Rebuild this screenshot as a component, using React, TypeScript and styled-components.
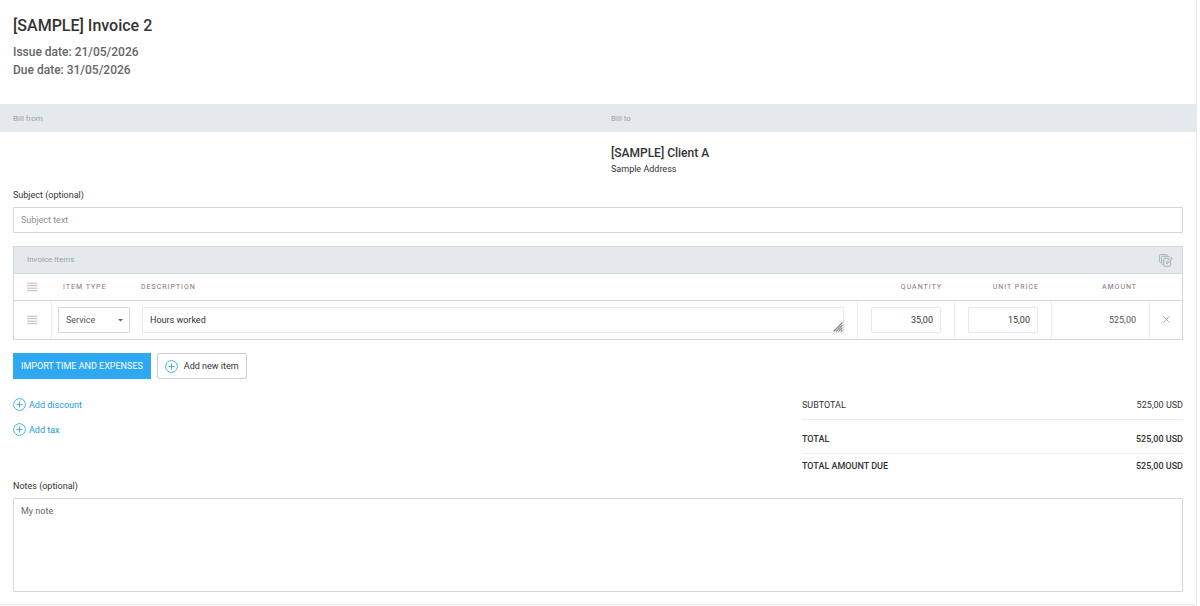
import React from "react";
import styled, { createGlobalStyle, css } from "styled-components";

const GlobalStyle = createGlobalStyle`
  * { box-sizing: border-box; }
  body {
    margin: 0;
    background: #fff;
    color: #333;
    font-family: Roboto, "Liberation Sans", sans-serif;
    font-size: 9px;
    line-height: 12px;
  }
  button, input, select, textarea { font: inherit; color: inherit; margin: 0; }
  svg { display: block; flex: none; }
`;

const line = "#d3d9db";
const soft = "#eceff0";

const Sheet = styled.main`
  margin-right: 3px;
  padding-bottom: 12px;
  border-right: 1px solid #e6e9eb;
  border-bottom: 1px solid #e6e9eb;
`;

const Header = styled.header`
  padding: 16px 13px 25px;
`;

const Title = styled.h1`
  margin: 0 0 8px;
  font-size: 16px;
  line-height: 20px;
  font-weight: 500;
`;

const DateLine = styled.p`
  margin: 0;
  font-size: 12px;
  line-height: 17px;
  font-weight: 500;
  color: #666;
`;

const Dates = styled.div`
  display: grid;
  gap: 1px;
`;

const PartyBar = styled.div`
  display: grid;
  grid-template-columns: 1fr 1fr;
  padding: 9px 0 7px;
  background: #e4e9ed;
  color: #9ba1a5;
  font-size: 8px;
`;

const PartyCell = styled.div`
  padding-left: 13px;
`;

const Parties = styled.div`
  display: grid;
  grid-template-columns: 1fr 1fr;
  padding: 13px 0 14px;
`;

const ClientName = styled.h2`
  margin: 0 0 2px;
  font-size: 12px;
  line-height: 16px;
  font-weight: 500;
`;

const Address = styled.p`
  margin: 0;
`;

const Body = styled.div`
  padding: 0 13px;
`;

const Label = styled.label`
  display: block;
  margin-bottom: 6px;
`;

const field = css`
  display: block;
  width: 100%;
  border: 1px solid ${line};
  border-radius: 1px;
  background: #fff;
  outline: none;
`;

const SubjectInput = styled.input`
  ${field}
  height: 26px;
  padding: 0 7px;
  &::placeholder { color: #8f8f8f; opacity: 1; }
`;

const NotesArea = styled.textarea`
  ${field}
  height: 94px;
  padding: 6px 7px;
  resize: none;
  color: #666;
`;

const Items = styled.section`
  margin-top: 13px;
  border: 1px solid ${line};
`;

const ItemsBar = styled.div`
  display: flex;
  align-items: center;
  justify-content: space-between;
  height: 26px;
  padding: 0 9px 0 13px;
  background: #e4e9ed;
`;

const ItemsTitle = styled.h3`
  margin: 0;
  font-size: 8px;
  font-weight: 400;
  color: #9ba1a5;
`;

const IconButton = styled.button`
  display: inline-flex;
  padding: 0;
  border: 0;
  background: none;
  color: #a4abaf;
  cursor: pointer;
`;

const Table = styled.table`
  width: 100%;
  table-layout: fixed;
  border-collapse: separate;
  border-spacing: 0;
`;

const Col = styled.col<{ $w?: number }>`
  ${(p) => p.$w && `width: ${p.$w}px;`}
`;

const Th = styled.th<{ $end?: boolean; $pad?: number }>`
  height: 28px;
  padding: 0 13px 0 ${(p) => p.$pad ?? 13}px;
  border-top: 1px solid ${line};
  border-bottom: 1px solid ${line};
  text-align: ${(p) => (p.$end ? "right" : "left")};
  font-size: 7px;
  font-weight: 400;
  letter-spacing: 1px;
  color: #777;
`;

const Td = styled.td<{ $tight?: boolean; $line?: boolean; $end?: boolean }>`
  height: 38px;
  padding: 0 13px 0 ${(p) => (p.$tight ? 6 : 13)}px;
  ${(p) => p.$line && `border-right: 1px solid ${soft};`}
  text-align: ${(p) => (p.$end ? "right" : "left")};
  color: #555;
`;

const SelectWrap = styled.div`
  position: relative;
  width: 72px;
`;

const Select = styled.select`
  ${field}
  height: 26px;
  padding: 0 7px;
  appearance: none;
`;

const Caret = styled.svg`
  position: absolute;
  top: 12px;
  right: 7px;
  pointer-events: none;
`;

const DescriptionWrap = styled.div`
  position: relative;
`;

const Description = styled.textarea`
  ${field}
  height: 26px;
  padding: 6px 7px;
  border-color: #e6eaeb;
  resize: none;
  overflow: hidden;
  color: #333;
`;

const Grip = styled.svg`
  position: absolute;
  right: 1px;
  bottom: 1px;
  pointer-events: none;
`;

const NumberInput = styled.input`
  ${field}
  height: 26px;
  padding: 0 7px;
  border-color: #e6eaeb;
  text-align: right;
  color: #333;
`;

const Actions = styled.div`
  display: flex;
  gap: 6px;
  margin-top: 13px;
`;

const Button = styled.button<{ $primary?: boolean }>`
  display: inline-flex;
  align-items: center;
  gap: 6px;
  height: 26px;
  padding: 0 7px;
  border: 1px solid ${(p) => (p.$primary ? "#2fa8f2" : "#ccd0d2")};
  border-radius: ${(p) => (p.$primary ? 0 : 2)}px;
  background: ${(p) => (p.$primary ? "#2fa8f2" : "#fff")};
  color: ${(p) => (p.$primary ? "#fff" : "#333")};
  white-space: nowrap;
  cursor: pointer;
`;

const Summary = styled.div`
  display: flex;
  justify-content: space-between;
  margin-top: 19px;
`;

const Links = styled.div`
  display: flex;
  flex-direction: column;
  align-items: flex-start;
  gap: 12px;
`;

const AddLink = styled.a`
  display: inline-flex;
  align-items: center;
  gap: 3px;
  height: 13px;
  color: #1a9cd6;
  text-decoration: none;
`;

const Totals = styled.dl`
  width: 33%;
  max-width: 381px;
  min-width: 240px;
  margin: 1px 0 0;
`;

const TotalRow = styled.div<{ $strong?: boolean; $space?: number; $last?: boolean }>`
  display: flex;
  justify-content: space-between;
  padding: ${(p) => p.$space ?? 0}px 0 ${(p) => (p.$last ? 0 : 8)}px;
  ${(p) => !p.$last && `border-bottom: 1px solid ${soft};`}
  font-weight: ${(p) => (p.$strong ? 500 : 400)};
`;

const Amount = styled.dd`
  margin: 0;
`;

const Notes = styled.div`
  margin-top: 8px;
`;

const PlusCircle = () => (
  <svg width="13" height="13" viewBox="0 0 13 13" fill="none" stroke="#38a9dc" aria-hidden="true">
    <circle cx="6.5" cy="6.5" r="5.9" strokeWidth="0.9" />
    <path d="M6.5 3.5v6M3.5 6.5h6" strokeWidth="0.9" />
  </svg>
);

const Lines = () => (
  <svg width="11" height="10" viewBox="0 0 11 10" stroke="#b9bdbf" aria-hidden="true">
    <path d="M0 1.2h10.5M0 3.7h10.5M0 6.2h10.5M0 8.7h10.5" strokeWidth="1" />
  </svg>
);

const CopyEdit = () => (
  <svg width="14" height="13" viewBox="0 0 14 13" fill="none" stroke="currentColor" strokeWidth="0.9" aria-hidden="true">
    <path d="M2.5 8.4H1.6a1 1 0 0 1-1-1V1.6a1 1 0 0 1 1-1h5.8a1 1 0 0 1 1 1" />
    <path d="M4.6 10.4H3.7a1 1 0 0 1-1-1V3.3a1 1 0 0 1 1-1h6a1 1 0 0 1 .9.7" />
    <path d="M9.6 4.3H5.8a1 1 0 0 0-1 1v6a1 1 0 0 0 1 1h4.8a1 1 0 0 0 1-1V7.2" />
    <path d="M7.4 9.7l.4-1.9 4-4.3 1.4 1.3-4 4.3z" />
  </svg>
);

export default function App() {
  return (
    <>
      <GlobalStyle />
      <Sheet>
        <Header>
          <Title>[SAMPLE] Invoice 2</Title>
          <Dates>
            <DateLine>Issue date: 21/05/2026</DateLine>
            <DateLine>Due date: 31/05/2026</DateLine>
          </Dates>
        </Header>

        <PartyBar>
          <PartyCell>Bill from</PartyCell>
          <PartyCell>Bill to</PartyCell>
        </PartyBar>
        <Parties>
          <PartyCell />
          <PartyCell>
            <ClientName>[SAMPLE] Client A</ClientName>
            <Address>Sample Address</Address>
          </PartyCell>
        </Parties>

        <Body>
          <Label htmlFor="subject">Subject (optional)</Label>
          <SubjectInput id="subject" type="text" placeholder="Subject text" />

          <Items>
            <ItemsBar>
              <ItemsTitle>Invoice items</ItemsTitle>
              <IconButton type="button" aria-label="Edit all items">
                <CopyEdit />
              </IconButton>
            </ItemsBar>
            <Table>
              <colgroup>
                <Col $w={38} />
                <Col $w={84} />
                <Col />
                <Col $w={97} />
                <Col $w={97} />
                <Col $w={98} />
                <Col $w={32} />
              </colgroup>
              <thead>
                <tr>
                  <Th aria-label="Order"><Lines /></Th>
                  <Th $pad={11}>ITEM TYPE</Th>
                  <Th $pad={5}>DESCRIPTION</Th>
                  <Th $end>QUANTITY</Th>
                  <Th $end>UNIT PRICE</Th>
                  <Th $end>AMOUNT</Th>
                  <Th aria-label="Remove" />
                </tr>
              </thead>
              <tbody>
                <tr>
                  <Td $line><Lines /></Td>
                  <Td $tight>
                    <SelectWrap>
                      <Select aria-label="Item type" defaultValue="Service">
                        <option>Service</option>
                        <option>Product</option>
                      </Select>
                      <Caret width="5" height="3" viewBox="0 0 5 3" fill="#666">
                        <path d="M0 0h5L2.5 2.5z" />
                      </Caret>
                    </SelectWrap>
                  </Td>
                  <Td $tight $line>
                    <DescriptionWrap>
                      <Description aria-label="Description" defaultValue="Hours worked" />
                      <Grip width="10" height="10" viewBox="0 0 10 10" stroke="#888" strokeWidth="1.1">
                        <path d="M0.5 9.5l9-9M3 9.5L9.5 3M5.5 9.5l4-4M8 9.5L9.5 8" />
                      </Grip>
                    </DescriptionWrap>
                  </Td>
                  <Td $line><NumberInput aria-label="Quantity" defaultValue="35,00" /></Td>
                  <Td $line><NumberInput aria-label="Unit price" defaultValue="15,00" /></Td>
                  <Td $line $end>525,00</Td>
                  <Td>
                    <IconButton type="button" aria-label="Remove item">
                      <svg width="7" height="7" viewBox="0 0 7 7" stroke="#a9adaf" strokeWidth="0.9">
                        <path d="M0.3 0.3l6.4 6.4M6.7 0.3L0.3 6.7" />
                      </svg>
                    </IconButton>
                  </Td>
                </tr>
              </tbody>
            </Table>
          </Items>

          <Actions>
            <Button type="button" $primary>IMPORT TIME AND EXPENSES</Button>
            <Button type="button"><PlusCircle />Add new item</Button>
          </Actions>

          <Summary>
            <Links>
              <AddLink href="#discount"><PlusCircle />Add discount</AddLink>
              <AddLink href="#tax"><PlusCircle />Add tax</AddLink>
            </Links>
            <Totals>
              <TotalRow>
                <dt>SUBTOTAL</dt>
                <Amount>525,00 USD</Amount>
              </TotalRow>
              <TotalRow $strong $space={13}>
                <dt>TOTAL</dt>
                <Amount>525,00 USD</Amount>
              </TotalRow>
              <TotalRow $strong $space={6} $last>
                <dt>TOTAL AMOUNT DUE</dt>
                <Amount>525,00 USD</Amount>
              </TotalRow>
            </Totals>
          </Summary>

          <Notes>
            <Label htmlFor="notes">Notes (optional)</Label>
            <NotesArea id="notes" defaultValue="My note" />
          </Notes>
        </Body>
      </Sheet>
    </>
  );
}
